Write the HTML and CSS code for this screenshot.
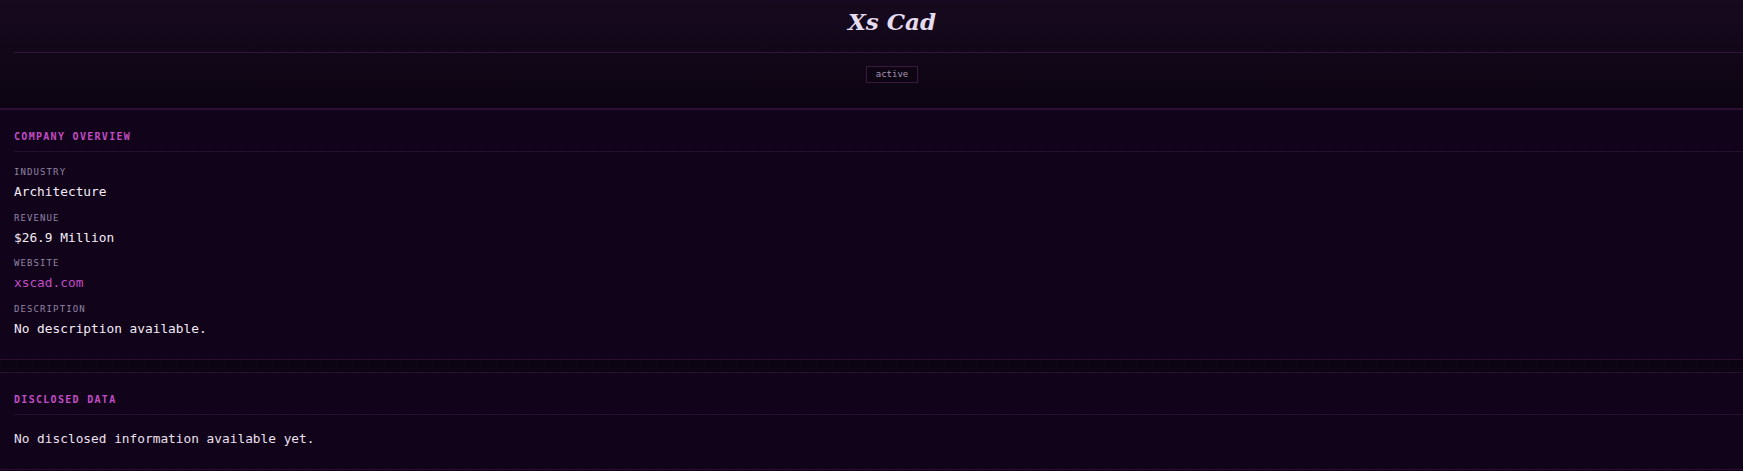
FILE: index.html
```html
<!DOCTYPE html>
<html lang="en">
<head>
<meta charset="utf-8">
<title>Xs Cad</title>
<link rel="stylesheet" href="styles.css">
</head>
<body>
<div class="page">
  <header class="hero">
    <div class="hero-inner">
      <div class="hero-top">
        <h1 class="title">Xs Cad</h1>
      </div>
      <div class="hero-meta">
        <span class="badge">active</span>
      </div>
    </div>
  </header>

  <section class="card">
    <div class="card-inner">
      <h2 class="card-title">Company Overview</h2>
      <div class="field">
        <div class="label">Industry</div>
        <div class="value">Architecture</div>
      </div>
      <div class="field">
        <div class="label">Revenue</div>
        <div class="value">$26.9 Million</div>
      </div>
      <div class="field">
        <div class="label">Website</div>
        <div class="value"><a class="link" href="#">xscad.com</a></div>
      </div>
      <div class="field">
        <div class="label">Description</div>
        <div class="value">No description available.</div>
      </div>
    </div>
  </section>

  <section class="card">
    <div class="card-inner">
      <h2 class="card-title">Disclosed Data</h2>
      <p class="empty">No disclosed information available yet.</p>
    </div>
  </section>
</div>
</body>
</html>
```

FILE: styles.css
```css
html, body {
  margin: 0;
  padding: 0;
  overflow-x: hidden;
}

body {
  background-color: #0c0413;
  background-image:
    linear-gradient(rgba(120, 40, 140, 0.035) 1px, transparent 1px),
    linear-gradient(90deg, rgba(120, 40, 140, 0.035) 1px, transparent 1px);
  background-size: 16px 16px;
  font-family: "DejaVu Sans Mono", monospace;
  color: #ece4f2;
  height: 471px;
}

.page {
  display: flex;
  flex-direction: column;
}

.hero {
  background: linear-gradient(180deg, rgba(24, 10, 32, 0.9) 0%, rgba(12, 4, 18, 0.95) 100%);
  border-bottom: 1px solid #2e1236;
}

.hero-inner {
  margin-left: 14px;
  width: calc(100% + 13px);
  padding-bottom: 25px;
}

.hero-top {
  text-align: center;
  border-bottom: 1px solid #33123b;
  padding-top: 4px;
  padding-bottom: 13px;
}

.title {
  margin: 0;
  font-family: "DejaVu Serif", serif;
  font-style: italic;
  font-weight: bold;
  font-size: 23px;
  line-height: 35px;
  color: #e6dcf0;
}

.hero-meta {
  display: flex;
  justify-content: center;
  margin-top: 13px;
}

.badge {
  display: inline-block;
  font-size: 9px;
  line-height: 11px;
  padding: 2px 9px;
  border: 1px solid #3a1840;
  background: #0d0512;
  color: #a898b6;
}

.card {
  background-color: rgba(20, 4, 32, 0.55);
  border-top: 1px solid #2a0f32;
  border-bottom: 1px solid #2a0f32;
  margin-bottom: 12px;
}

.card-inner {
  padding: 20px 0 11px 14px;
}

.card-title {
  margin: 0 0 14px 0;
  font-size: 10px;
  line-height: 14px;
  font-weight: bold;
  letter-spacing: 1.3px;
  text-transform: uppercase;
  color: #c24cc4;
  padding-bottom: 7px;
  border-bottom: 1px solid #24102c;
}

.field {
  margin-bottom: 9.5px;
}

.label {
  font-size: 9px;
  line-height: 12px;
  letter-spacing: 1.1px;
  text-transform: uppercase;
  color: #9284a4;
  margin-bottom: 4px;
}

.value {
  font-size: 12.8px;
  line-height: 20px;
  color: #f4ecf6;
}

.link {
  color: #c44ac6;
  text-decoration: none;
}

.empty {
  margin: 9px 0 9px 0;
  font-size: 12.8px;
  line-height: 20px;
  color: #ece0ee;
}
```
